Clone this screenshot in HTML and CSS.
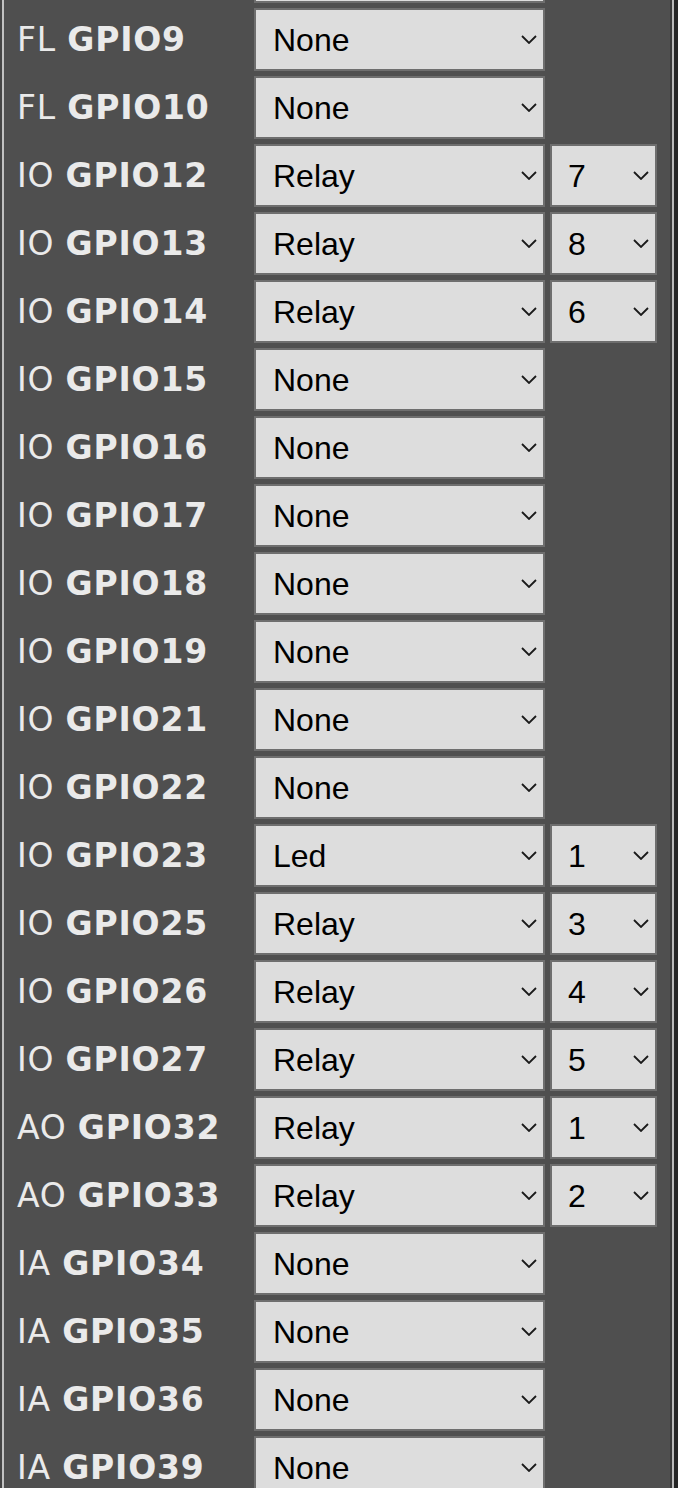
FILE: index.html
```html
<!DOCTYPE html>
<html>
<head>
<meta charset="utf-8">
<link rel="stylesheet" href="styles.css">
</head>
<body>
<div class="panel">
  <div class="list">
    <div class="row"><div class="lbl"></div><div class="wrap"><select class="sel"><option></option></select><svg class="chev" viewBox="0 0 16 9"><path d="M1 1 L8 8 L15 1"/></svg></div></div>
    <div class="row"><div class="lbl">FL <b>GPIO9</b></div><div class="wrap"><select class="sel"><option>None</option></select><svg class="chev" viewBox="0 0 16 9"><path d="M1 1 L8 8 L15 1"/></svg></div></div>
    <div class="row"><div class="lbl">FL <b>GPIO10</b></div><div class="wrap"><select class="sel"><option>None</option></select><svg class="chev" viewBox="0 0 16 9"><path d="M1 1 L8 8 L15 1"/></svg></div></div>
    <div class="row"><div class="lbl">IO <b>GPIO12</b></div><div class="wrap"><select class="sel"><option>Relay</option></select><svg class="chev" viewBox="0 0 16 9"><path d="M1 1 L8 8 L15 1"/></svg></div><div class="wrap"><select class="sel small"><option>7</option></select><svg class="chev" viewBox="0 0 16 9"><path d="M1 1 L8 8 L15 1"/></svg></div></div>
    <div class="row"><div class="lbl">IO <b>GPIO13</b></div><div class="wrap"><select class="sel"><option>Relay</option></select><svg class="chev" viewBox="0 0 16 9"><path d="M1 1 L8 8 L15 1"/></svg></div><div class="wrap"><select class="sel small"><option>8</option></select><svg class="chev" viewBox="0 0 16 9"><path d="M1 1 L8 8 L15 1"/></svg></div></div>
    <div class="row"><div class="lbl">IO <b>GPIO14</b></div><div class="wrap"><select class="sel"><option>Relay</option></select><svg class="chev" viewBox="0 0 16 9"><path d="M1 1 L8 8 L15 1"/></svg></div><div class="wrap"><select class="sel small"><option>6</option></select><svg class="chev" viewBox="0 0 16 9"><path d="M1 1 L8 8 L15 1"/></svg></div></div>
    <div class="row"><div class="lbl">IO <b>GPIO15</b></div><div class="wrap"><select class="sel"><option>None</option></select><svg class="chev" viewBox="0 0 16 9"><path d="M1 1 L8 8 L15 1"/></svg></div></div>
    <div class="row"><div class="lbl">IO <b>GPIO16</b></div><div class="wrap"><select class="sel"><option>None</option></select><svg class="chev" viewBox="0 0 16 9"><path d="M1 1 L8 8 L15 1"/></svg></div></div>
    <div class="row"><div class="lbl">IO <b>GPIO17</b></div><div class="wrap"><select class="sel"><option>None</option></select><svg class="chev" viewBox="0 0 16 9"><path d="M1 1 L8 8 L15 1"/></svg></div></div>
    <div class="row"><div class="lbl">IO <b>GPIO18</b></div><div class="wrap"><select class="sel"><option>None</option></select><svg class="chev" viewBox="0 0 16 9"><path d="M1 1 L8 8 L15 1"/></svg></div></div>
    <div class="row"><div class="lbl">IO <b>GPIO19</b></div><div class="wrap"><select class="sel"><option>None</option></select><svg class="chev" viewBox="0 0 16 9"><path d="M1 1 L8 8 L15 1"/></svg></div></div>
    <div class="row"><div class="lbl">IO <b>GPIO21</b></div><div class="wrap"><select class="sel"><option>None</option></select><svg class="chev" viewBox="0 0 16 9"><path d="M1 1 L8 8 L15 1"/></svg></div></div>
    <div class="row"><div class="lbl">IO <b>GPIO22</b></div><div class="wrap"><select class="sel"><option>None</option></select><svg class="chev" viewBox="0 0 16 9"><path d="M1 1 L8 8 L15 1"/></svg></div></div>
    <div class="row"><div class="lbl">IO <b>GPIO23</b></div><div class="wrap"><select class="sel"><option>Led</option></select><svg class="chev" viewBox="0 0 16 9"><path d="M1 1 L8 8 L15 1"/></svg></div><div class="wrap"><select class="sel small"><option>1</option></select><svg class="chev" viewBox="0 0 16 9"><path d="M1 1 L8 8 L15 1"/></svg></div></div>
    <div class="row"><div class="lbl">IO <b>GPIO25</b></div><div class="wrap"><select class="sel"><option>Relay</option></select><svg class="chev" viewBox="0 0 16 9"><path d="M1 1 L8 8 L15 1"/></svg></div><div class="wrap"><select class="sel small"><option>3</option></select><svg class="chev" viewBox="0 0 16 9"><path d="M1 1 L8 8 L15 1"/></svg></div></div>
    <div class="row"><div class="lbl">IO <b>GPIO26</b></div><div class="wrap"><select class="sel"><option>Relay</option></select><svg class="chev" viewBox="0 0 16 9"><path d="M1 1 L8 8 L15 1"/></svg></div><div class="wrap"><select class="sel small"><option>4</option></select><svg class="chev" viewBox="0 0 16 9"><path d="M1 1 L8 8 L15 1"/></svg></div></div>
    <div class="row"><div class="lbl">IO <b>GPIO27</b></div><div class="wrap"><select class="sel"><option>Relay</option></select><svg class="chev" viewBox="0 0 16 9"><path d="M1 1 L8 8 L15 1"/></svg></div><div class="wrap"><select class="sel small"><option>5</option></select><svg class="chev" viewBox="0 0 16 9"><path d="M1 1 L8 8 L15 1"/></svg></div></div>
    <div class="row"><div class="lbl">AO <b>GPIO32</b></div><div class="wrap"><select class="sel"><option>Relay</option></select><svg class="chev" viewBox="0 0 16 9"><path d="M1 1 L8 8 L15 1"/></svg></div><div class="wrap"><select class="sel small"><option>1</option></select><svg class="chev" viewBox="0 0 16 9"><path d="M1 1 L8 8 L15 1"/></svg></div></div>
    <div class="row"><div class="lbl">AO <b>GPIO33</b></div><div class="wrap"><select class="sel"><option>Relay</option></select><svg class="chev" viewBox="0 0 16 9"><path d="M1 1 L8 8 L15 1"/></svg></div><div class="wrap"><select class="sel small"><option>2</option></select><svg class="chev" viewBox="0 0 16 9"><path d="M1 1 L8 8 L15 1"/></svg></div></div>
    <div class="row"><div class="lbl">IA <b>GPIO34</b></div><div class="wrap"><select class="sel"><option>None</option></select><svg class="chev" viewBox="0 0 16 9"><path d="M1 1 L8 8 L15 1"/></svg></div></div>
    <div class="row"><div class="lbl">IA <b>GPIO35</b></div><div class="wrap"><select class="sel"><option>None</option></select><svg class="chev" viewBox="0 0 16 9"><path d="M1 1 L8 8 L15 1"/></svg></div></div>
    <div class="row"><div class="lbl">IA <b>GPIO36</b></div><div class="wrap"><select class="sel"><option>None</option></select><svg class="chev" viewBox="0 0 16 9"><path d="M1 1 L8 8 L15 1"/></svg></div></div>
    <div class="row"><div class="lbl">IA <b>GPIO39</b></div><div class="wrap"><select class="sel"><option>None</option></select><svg class="chev" viewBox="0 0 16 9"><path d="M1 1 L8 8 L15 1"/></svg></div></div>
  </div>
</div>
</body>
</html>
```

FILE: styles.css
```css
html, body {
  margin: 0;
  padding: 0;
  background: #252525;
  height: 100%;
  overflow: hidden;
}

.panel {
  width: 674px;
  height: 1488px;
  background: #4f4f4f;
  border-left: 2px solid #454545;
  border-right: 2px solid #b9b9b9;
  box-shadow: inset 2px 0 0 #c2c2c2, inset -2px 0 0 #3a3a3a;
  padding-left: 15px;
  box-sizing: border-box;
  overflow: hidden;
}

.list {
  margin-top: -60px;
  display: flex;
  flex-direction: column;
  gap: 5px;
}

.row {
  display: grid;
  grid-template-columns: 232px 291px 107px;
  column-gap: 5px;
  align-items: center;
  height: 63px;
}

.lbl {
  font-family: "DejaVu Sans", Verdana, sans-serif;
  font-size: 33px;
  color: #eaeaea;
  white-space: nowrap;
  letter-spacing: 0.8px;
}

.lbl b {
  font-weight: bold;
}

.wrap {
  position: relative;
  height: 63px;
}

.sel {
  -webkit-appearance: none;
  appearance: none;
  width: 100%;
  height: 63px;
  margin: 0;
  border: 2px solid #6e6e6e;
  border-radius: 0;
  background: #dddddd;
  color: #000000;
  font-family: "Liberation Sans", Arial, sans-serif;
  font-size: 32px;
  padding: 0 0 0 17px;
  box-sizing: border-box;
  outline: none;
}

.sel.small {
  padding-left: 16px;
}

.chev {
  position: absolute;
  right: 8px;
  top: 27px;
  width: 16px;
  height: 9px;
  pointer-events: none;
  fill: none;
  stroke: #1a1a1a;
  stroke-width: 1.8;
}
```
